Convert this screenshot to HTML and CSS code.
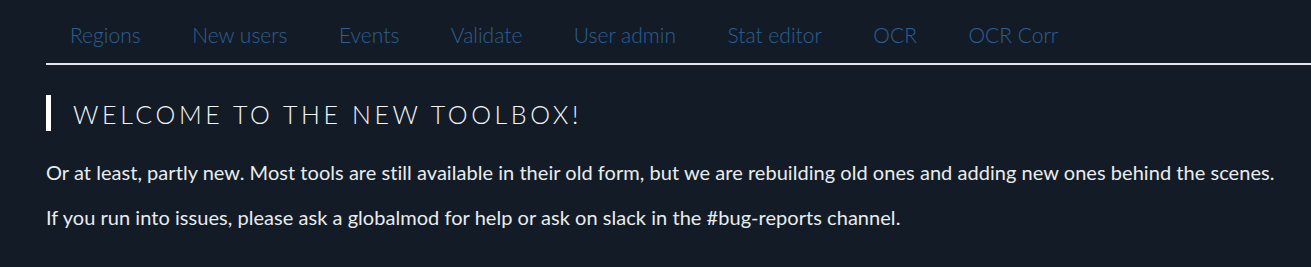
FILE: index.html
```html
<!DOCTYPE html>
<html lang="en">
<head>
    <meta charset="UTF-8">
    <meta name="viewport" content="width=device-width, initial-scale=1.0">
    <title>Toolbox</title>
    <link rel="stylesheet" href="styles.css">
</head>
<body>
    <div class="page">
        <nav class="tabs">
            <a href="#" class="tab">Regions</a>
            <a href="#" class="tab">New users</a>
            <a href="#" class="tab">Events</a>
            <a href="#" class="tab">Validate</a>
            <a href="#" class="tab">User admin</a>
            <a href="#" class="tab">Stat editor</a>
            <a href="#" class="tab">OCR</a>
            <a href="#" class="tab">OCR Corr</a>
        </nav>

        <h1 class="title">Welcome to the new toolbox!</h1>

        <p class="text">Or at least, partly new. Most tools are still available in their old form, but we are rebuilding old ones and adding new ones behind the scenes.</p>
        <p class="text">If you run into issues, please ask a globalmod for help or ask on slack in the #bug-reports channel.</p>
    </div>
</body>
</html>
```

FILE: styles.css
```css
body {
    font-family: Lato, "Open Sans", sans-serif;
    background-color: #131c26;
    color: #e9ecef;
    margin: 0;
}
.page {
    padding-left: 46px;
    padding-top: 12px;
}
.tabs {
    display: flex;
    border-bottom: 2px solid #e4e6ee;
    height: 53px;
    box-sizing: border-box;
}
.tab {
    color: #2d5f94;
    text-decoration: none;
    font-size: 21px;
    font-weight: 300;
    padding: 10px 24px 0;
    margin-right: 3.5px;
}
.title {
    margin: 30px 0 0;
    border-left: 5px solid #fff;
    padding-left: 22px;
    height: 36px;
    line-height: 38px;
    font-size: 25px;
    font-weight: 300;
    letter-spacing: 3.6px;
    text-transform: uppercase;
    color: #f2f4f7;
}
.text {
    font-size: 20px;
    margin: 29px 0 0;
    line-height: 24px;
    letter-spacing: 0.04px;
}
.text + .text {
    margin-top: 21px;
}
```
